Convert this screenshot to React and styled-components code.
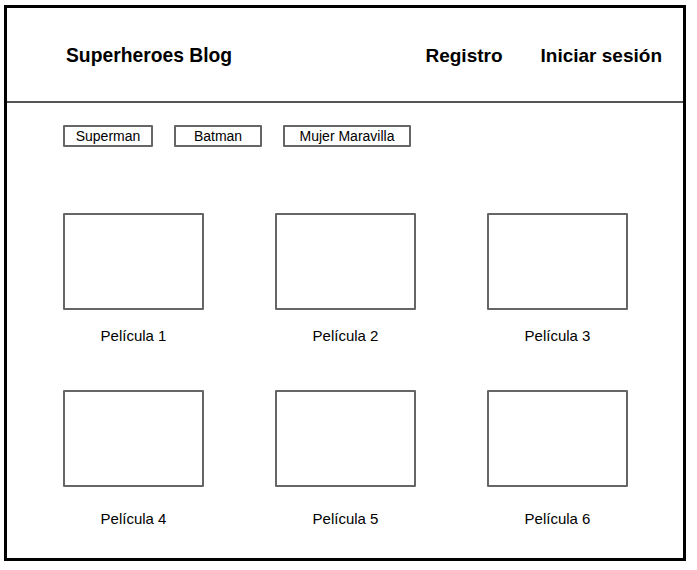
import styled, { createGlobalStyle } from 'styled-components';

const GlobalStyle = createGlobalStyle`
body {
  margin: 0;
  background: #fff;
  font-family: "Liberation Sans", Arial, sans-serif;
  color: #000;
}
`;

const tags = [
  { name: 'Superman', width: 90 },
  { name: 'Batman', width: 88 },
  { name: 'Mujer Maravilla', width: 128 },
];

const rows = [
  { gap: 17, items: ['Película 1', 'Película 2', 'Película 3'] },
  { gap: 23, items: ['Película 4', 'Película 5', 'Película 6'] },
];

const App = () => {
  return (
    <>
      <GlobalStyle />
      <Frame>
        <Header>
          <Brand>Superheroes Blog</Brand>
          <Nav>
            <NavLink>Registro</NavLink>
            <NavLink>Iniciar sesión</NavLink>
          </Nav>
        </Header>
        <Tags>
          {tags.map((t) => (
            <Tag key={t.name} $width={t.width}>{t.name}</Tag>
          ))}
        </Tags>
        <Movies>
          {rows.map((row) =>
            row.items.map((title) => (
              <Movie key={title}>
                <Poster />
                <Caption $gap={row.gap}>{title}</Caption>
              </Movie>
            ))
          )}
        </Movies>
      </Frame>
    </>
  );
};

const Frame = styled.div`
  box-sizing: border-box;
  margin: 5px 0 0 4px;
  width: 682px;
  height: 556px;
  border: 3px solid #000;
  display: flex;
  flex-direction: column;
`;

const Header = styled.header`
  box-sizing: border-box;
  height: 95px;
  border-bottom: 2px solid #555;
  display: flex;
  align-items: center;
  justify-content: space-between;
  padding: 3px 21px 0 59px;
`;

const Brand = styled.h1`
  margin: 0;
  font-size: 19.3px;
  font-weight: bold;
`;

const Nav = styled.nav`
  display: flex;
  gap: 38px;
`;

const NavLink = styled.span`
  font-size: 19px;
  font-weight: bold;
`;

const Tags = styled.div`
  display: flex;
  gap: 21px;
  padding: 22px 0 0 56px;
`;

const Tag = styled.button`
  box-sizing: border-box;
  width: ${(p) => p.$width}px;
  height: 22px;
  padding: 0;
  background: #fff;
  border: 2px solid #666;
  border-radius: 1px;
  font-family: "Liberation Sans", Arial, sans-serif;
  font-size: 14px;
  color: #000;
`;

const Movies = styled.div`
  display: grid;
  grid-template-columns: repeat(3, 141px);
  column-gap: 71px;
  row-gap: 46px;
  padding: 66px 0 0 56px;
`;

const Movie = styled.div`
  display: flex;
  flex-direction: column;
  align-items: center;
`;

const Poster = styled.div`
  box-sizing: border-box;
  width: 141px;
  height: 97px;
  border: 2px solid #666;
  border-radius: 1px;
`;

const Caption = styled.span`
  margin-top: ${(p) => p.$gap}px;
  font-size: 15px;
  line-height: 17px;
`;

export default App;
